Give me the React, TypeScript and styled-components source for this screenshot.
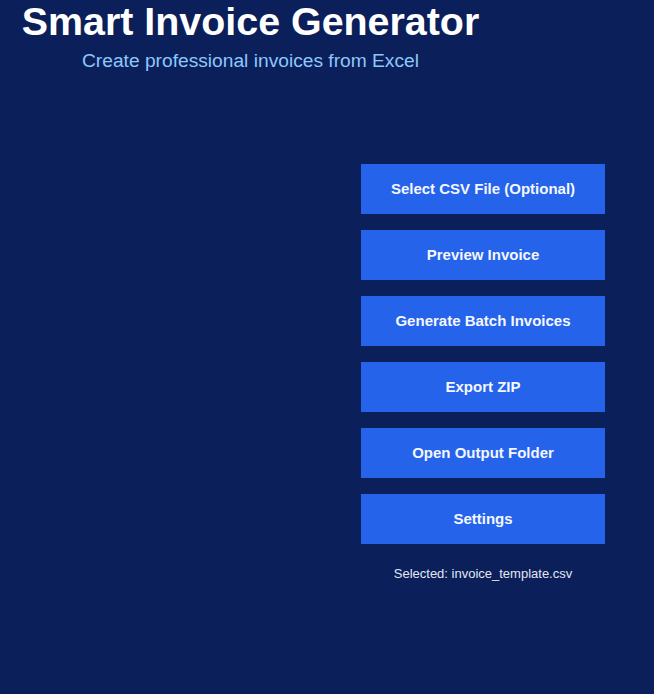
import React from "react";
import styled, { createGlobalStyle } from "styled-components";

const Global = createGlobalStyle`
  html, body {
    margin: 0;
    padding: 0;
    background: #0b1f5b;
  }
  body {
    font-family: "Liberation Sans", Arial, sans-serif;
    min-height: 694px;
  }
`;

const Page = styled.div`
  width: 654px;
  min-height: 694px;
  background: #0b1f5b;
  display: flex;
  flex-direction: column;
`;

const Header = styled.header`
  width: 501px;
  padding-top: 1px;
  display: flex;
  flex-direction: column;
  align-items: center;
`;

const Title = styled.h1`
  margin: 0;
  font-family: "Liberation Sans", Arial, sans-serif;
  font-weight: 700;
  font-size: 39.4px;
  line-height: 40px;
  color: #ffffff;
  white-space: nowrap;
`;

const Subtitle = styled.p`
  margin: 10px 0 0;
  font-size: 19.2px;
  line-height: 19px;
  color: #8cc8fb;
  white-space: nowrap;
`;

const Panel = styled.section`
  margin-top: 94px;
  margin-left: 361px;
  width: 244px;
  display: flex;
  flex-direction: column;
  align-items: stretch;
  gap: 16px;
`;

const ActionButton = styled.button`
  height: 50px;
  border: none;
  border-radius: 0;
  background: #2563eb;
  color: #f4f7ff;
  font-family: "Liberation Sans", Arial, sans-serif;
  font-weight: 700;
  font-size: 15px;
  padding: 0 0 2px;
  cursor: pointer;
`;

const Status = styled.div`
  margin-top: 7px;
  text-align: center;
  font-size: 13px;
  line-height: 13px;
  color: #e2e7f2;
  white-space: nowrap;
`;

const actions = [
  "Select CSV File (Optional)",
  "Preview Invoice",
  "Generate Batch Invoices",
  "Export ZIP",
  "Open Output Folder",
  "Settings",
];

export default function App() {
  return (
    <Page>
      <Global />
      <Header>
        <Title>Smart Invoice Generator</Title>
        <Subtitle>Create professional invoices from Excel</Subtitle>
      </Header>
      <Panel>
        {actions.map((a) => (
          <ActionButton key={a}>{a}</ActionButton>
        ))}
        <Status>Selected: invoice_template.csv</Status>
      </Panel>
    </Page>
  );
}
